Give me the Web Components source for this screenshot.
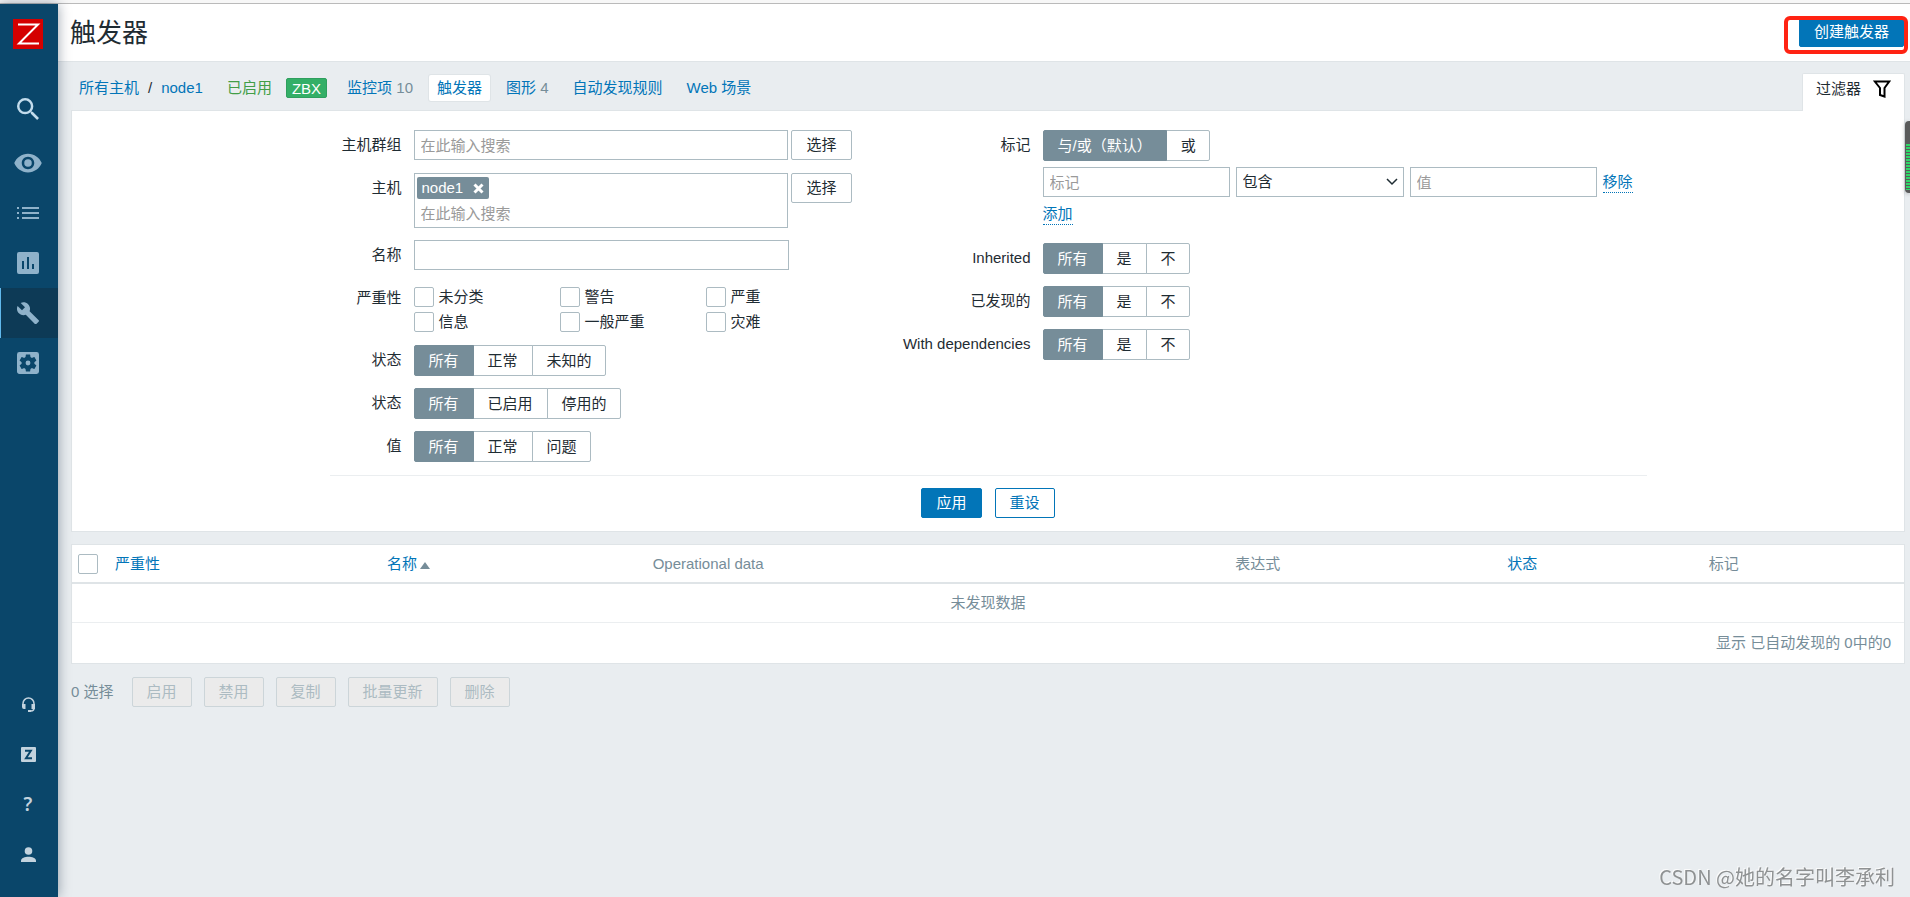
<!DOCTYPE html>
<html lang="zh-CN">
<head>
<meta charset="utf-8">
<meta name="viewport" content="width=device-width, initial-scale=1">
<title>触发器</title>
<style>
  :root {
    --blue: #0275b8;
    --ink: #1f2c33;
    --muted: #768d99;
    --field-border: #acbbc2;
    --line: #dfe4e7;
    --page: #e9edf0;
  }
  * { box-sizing: border-box; }
  body {
    margin: 0;
    background: var(--page);
    color: var(--ink);
    font: 15px/20px "Liberation Sans", "Noto Sans CJK SC", sans-serif;
  }
</style>
</head>
<body>
<app-shell>
  <side-bar slot="side"></side-bar>
  <page-header>触发器</page-header>
  <host-nav></host-nav>
  <trigger-filter></trigger-filter>
  <trigger-table></trigger-table>
  <bulk-actions></bulk-actions>
</app-shell>
<meter-widget></meter-widget>
<water-mark>CSDN @她的名字叫李承利</water-mark>

<script>
const define = (name, markup, setup) => customElements.define(name, class extends HTMLElement {
  constructor() {
    super();
    this.attachShadow({ mode: 'open' });
  }
  connectedCallback() {
    if (this.shadowRoot.firstChild) return;
    const t = document.createElement('template');
    t.innerHTML = '<style>*,:host{box-sizing:border-box}a{text-decoration:none;color:var(--blue)}</style>' +
      (typeof markup === 'function' ? markup(this) : markup);
    this.shadowRoot.append(t.content.cloneNode(true));
    if (setup) setup(this);
  }
});

/* ---------- icons ---------- */
const ICONS = {
  logo: ['0 0 30 30', '<path fill="#d40000" d="M0 0h30v30H0z"/><path fill="none" stroke="#fff" stroke-width="2" d="M5 5.500h20L6 24.500h20" stroke-linejoin="miter"/>'],
  search: ['3 3 17.500 17.500', '<path d="M15.500 14h-.79l-.28-.27A6.470 6.470 0 0 0 16 9.500 6.500 6.500 0 1 0 9.500 16c1.610 0 3.090-.59 4.230-1.570l.27.28v.79l5 4.990L20.490 19l-4.990-5zm-6 0C7.010 14 5 11.990 5 9.500S7.010 5 9.500 5 14 7.010 14 9.500 11.990 14 9.500 14z"/>'],
  eye: ['1 4 22 16', '<path d="M12 4.500C7 4.500 2.730 7.610 1 12c1.730 4.390 6 7.500 11 7.500s9.270-3.110 11-7.500c-1.730-4.390-6-7.500-11-7.500zM12 17c-2.760 0-5-2.240-5-5s2.240-5 5-5 5 2.240 5 5-2.240 5-5 5zm0-8a3 3 0 1 0 0 6 3 3 0 0 0 0-6z"/>'],
  list: ['0 0 22 22', '<path d="M0 5h2v2H0zM5 5h17v2H5zM0 10h2v2H0zM5 10h17v2H5zM0 15h2v2H0zM5 15h17v2H5z"/>'],
  chart: ['0 0 22 22', '<path fill-rule="evenodd" d="M2 0h18a2 2 0 0 1 2 2v18a2 2 0 0 1-2 2H2a2 2 0 0 1-2-2V2a2 2 0 0 1 2-2zM5 9v8h2V9zM10 5v12h2V5zM15 12v5h2v-5z"/>'],
  wrench: ['1 1 22 21.500', '<path d="M22.700 19l-9.100-9.100c.9-2.300.4-5-1.500-6.900-2-2-5-2.400-7.400-1.300L9 6 6 9 1.600 4.700C.4 7.100.9 10.100 2.900 12.100c1.900 1.900 4.600 2.400 6.900 1.500l9.100 9.100c.4.4 1 .4 1.400 0l2.300-2.300c.5-.4.5-1.100.1-1.400z"/>'],
  gear: ['3 3 18 18', '<path fill-rule="evenodd" d="M19 3H5a2 2 0 0 0-2 2v14c0 1.100.9 2 2 2h14a2 2 0 0 0 2-2V5a2 2 0 0 0-2-2zm-1.750 9c0 .23-.02.46-.05.68l1.480 1.160c.13.11.17.3.08.45l-1.400 2.420c-.09.15-.27.21-.43.15l-1.740-.7c-.36.28-.76.51-1.180.69l-.26 1.850c-.03.17-.18.3-.35.3h-2.800c-.17 0-.32-.13-.35-.29l-.26-1.850c-.43-.18-.82-.41-1.180-.69l-1.740.7c-.16.06-.34 0-.43-.15l-1.400-2.420a.36.36 0 0 1 .08-.45l1.480-1.160a5.200 5.200 0 0 1 0-1.370l-1.480-1.160a.36.36 0 0 1-.08-.45l1.400-2.420c.09-.15.27-.21.43-.15l1.740.7c.36-.28.76-.51 1.180-.69l.26-1.850c.03-.17.18-.3.35-.3h2.800c.17 0 .32.13.35.29l.26 1.850c.43.18.82.41 1.180.69l1.740-.7c.16-.06.34 0 .43.15l1.400 2.420c.09.15.05.34-.08.45l-1.480 1.160c.03.23.05.46.05.69zM12 10a2 2 0 1 0 0 4 2 2 0 0 0 0-4z"/>'],
  headset: ['0 0 15 15', '<path fill="none" stroke="currentColor" stroke-width="1.500" d="M2 8V6.500a5.500 5.500 0 0 1 11 0V11c0 2-1 3-3 3H8"/><path d="M1 7h3.500v5H3a2 2 0 0 1-2-2zM10.500 7H14v5h-3.500zM7 13h3v2H7z"/>'],
  zbox: ['0 0 15 15', '<path d="M1 0h13a1 1 0 0 1 1 1v13a1 1 0 0 1-1 1H1a1 1 0 0 1-1-1V1a1 1 0 0 1 1-1z"/><path fill="none" stroke="#0a466a" stroke-width="2" d="M4 3.800h5.800L5 11.200h6"/>'],
  user: ['0 0 15 15', '<circle cx="7.500" cy="4" r="3.800"/><path d="M0 15v-1.500C0 11 4 9.700 7.500 9.700S15 11 15 13.500V15z"/>'],
  funnel: ['0 0 18 18', '<path fill="none" stroke="#000" stroke-width="2" d="M1.800 1.500h14.400L11.500 8v8.500L7 15V8z"/>'],
  cross: ['0 0 11 11', '<path fill="none" stroke="#fff" stroke-width="3" d="M1.500 1.500l8 8M9.500 1.500l-8 8"/>'],
  chevron: ['0 0 12 8', '<path fill="none" stroke="#1f2c33" stroke-width="1.500" d="M1 1l5 5 5-5"/>'],
};
define('ui-icon', el => {
  const [box, body] = ICONS[el.getAttribute('name')];
  const w = el.getAttribute('w'), h = el.getAttribute('h') || w;
  return `<style>:host{display:block;line-height:0}svg{display:block;fill:currentColor}</style>
    <svg width="${w}" height="${h}" viewBox="${box}" aria-hidden="true">${body}</svg>`;
});

/* ---------- frame ---------- */
define('app-shell', `
  <style>
    :host { display: flex; flex-direction: column; min-height: 100vh; }
    .strip { height: 4px; background: #f7f7f7; border-bottom: 1px solid #bababa; }
    .row { flex: 1; display: flex; }
    main { flex: 1; min-width: 0; }
  </style>
  <div class="strip"></div>
  <div class="row"><slot name="side"></slot><main><slot></slot></main></div>`);

define('side-bar', `
  <style>
    :host { display: flex; width: 58px; flex: none; position: relative; z-index: 2;
      background: #0a466a; box-shadow: 0 0 12px rgba(0,26,51,.4); }
    nav { flex: 1; display: flex; flex-direction: column; padding: 15px 0 18px; }
    a { height: 50px; display: grid; place-items: center; color: #8fb2ca; padding-right: 2px; }
    .logo { height: 30px; padding-right: 2px; }
    .search { margin: 35px 0 4px; color: #c3dcec; }
    .on { background: #0d3a56; box-shadow: inset 1px 0 #60b8ec; }
    .low { color: #c3d3de; }
    .push { margin-top: auto; }
    .q { font: 600 19px/20px "Noto Sans", sans-serif; }
  </style>
  <nav aria-label="Main">
    <a class="logo" href="#" aria-label="Zabbix"><ui-icon name="logo" w="30"></ui-icon></a>
    <a class="search" href="#" aria-label="搜索"><ui-icon name="search" w="22"></ui-icon></a>
    <a href="#" aria-label="监测"><ui-icon name="eye" w="28" h="20"></ui-icon></a>
    <a href="#" aria-label="资产记录"><ui-icon name="list" w="22"></ui-icon></a>
    <a href="#" aria-label="报表"><ui-icon name="chart" w="22"></ui-icon></a>
    <a class="on" href="#" aria-label="配置"><ui-icon name="wrench" w="22"></ui-icon></a>
    <a href="#" aria-label="管理"><ui-icon name="gear" w="22"></ui-icon></a>
    <a class="low push" href="#" aria-label="支持"><ui-icon name="headset" w="15"></ui-icon></a>
    <a class="low" href="#" aria-label="Share"><ui-icon name="zbox" w="15"></ui-icon></a>
    <a class="low q" href="#">?</a>
    <a class="low" href="#" aria-label="用户"><ui-icon name="user" w="15"></ui-icon></a>
  </nav>`);

define('ui-button', el => `
  <style>
    :host { display: inline-block; flex: none; }
    button { display: block; height: 30px; padding: 0 14px; font: inherit; line-height: 28px;
      color: var(--ink); background: #fff; border: 1px solid var(--field-border); border-radius: 2px; }
    .primary { color: #fff; background: var(--blue); border-color: var(--blue); }
    .outline { color: var(--blue); border-color: var(--blue); }
    button:disabled { color: #acbbc2; background: #ebebeb; border-color: #ccd5d9; }
  </style>
  <button type="button" class="${el.getAttribute('kind') || ''}" ${el.hasAttribute('disabled') ? 'disabled' : ''}><slot></slot></button>`);

define('page-header', `
  <style>
    :host { display: flex; justify-content: space-between; align-items: flex-start; height: 58px; padding: 13px 6px 0 12px;
      background: #fff; border-bottom: 1px solid var(--line); }
    h1 { margin: 0; font-size: 26px; line-height: 32px; font-weight: 400; }
    .mark { position: relative; }
    .mark::after { content: ""; position: absolute; inset: -1px -4px -7px -15px;
      border: 4px solid #ff2313; border-radius: 6px; pointer-events: none; }
  </style>
  <h1><slot></slot></h1>
  <div class="mark"><ui-button kind="primary">创建触发器</ui-button></div>`);

define('host-nav', `
  <style>
    :host { display: flex; justify-content: space-between; align-items: flex-end; height: 48px; padding: 0 5px 0 13px; }
    nav { display: flex; align-items: center; height: 48px; gap: 8px; padding: 4px 0 0; }
    nav > * { padding: 3px 8px; line-height: 20px; }
    .crumb { display: flex; gap: 9px; }
    .ok { color: #429e47; }
    .count { color: var(--muted); }
    .zbx { padding: 0 5px; margin: 0 4px 0 -2px; height: 20px; color: #fff; background: #34af67;
      border: 1px solid #2f9f5e; border-radius: 2px; line-height: 19px; }
    .on { background: #fff; border-radius: 2px; box-shadow: 0 0 0 1px var(--line); }
    .tab { display: flex; align-items: center; gap: 12px; height: 38px; padding: 0 13px 8px; margin-bottom: -1px;
      position: relative; background: #fff; color: var(--ink);
      border: 1px solid var(--line); border-bottom: 0; border-radius: 2px 2px 0 0; }
  </style>
  <nav aria-label="Host">
    <span class="crumb"><a href="#">所有主机</a><span>/</span><a href="#">node1</a></span>
    <span class="ok">已启用</span>
    <span class="zbx">ZBX</span>
    <span><a href="#">监控项</a> <span class="count">10</span></span>
    <a class="on" href="#">触发器</a>
    <span><a href="#">图形</a> <span class="count">4</span></span>
    <a href="#">自动发现规则</a>
    <a href="#">Web 场景</a>
  </nav>
  <a class="tab" href="#">过滤器<ui-icon name="funnel" w="18"></ui-icon></a>`);

/* ---------- form fields ---------- */
const FIELD = `
  <style>
    :host { display: grid; grid-template-columns: var(--label-width) 1fr; column-gap: 12px; align-items: start; min-height: 31px; }
    .label { text-align: right; line-height: 20px; padding-top: 5px; }
    input.text { width: 375px; height: 30px; padding: 0 6px; font: inherit; color: var(--ink);
      background: #fff; border: 1px solid var(--field-border); border-radius: 0; outline: 0; }
    input::placeholder { color: #9a9a9a; opacity: 1; }
  </style>`;

define('text-field', el => FIELD + `
  <label class="label" for="f">${el.getAttribute('label')}</label>
  <input class="text" id="f" type="text">`);

define('pick-field', el => {
  const chip = el.getAttribute('chip');
  return FIELD + `
  <style>
    .row { display: flex; align-items: flex-start; gap: 3px; }
    .box { width: 375px; border: 1px solid var(--field-border); background: #fff; }
    .box input.text { display: block; width: 100%; height: 28px; border: 0; background: none; }
    .chip { display: flex; align-items: center; gap: 10px; width: max-content; height: 22px; margin: 3px 2px 0;
      padding: 0 5px; color: #fff; background: var(--muted); border-radius: 2px; }
    .chip button { padding: 0; border: 0; background: none; }
  </style>
  <label class="label" for="f">${el.getAttribute('label')}</label>
  <div class="row">
    <div class="box">${chip ? `<div class="chip">${chip}<button type="button" aria-label="移除 ${chip}"><ui-icon name="cross" w="11"></ui-icon></button></div>` : ''}
      <input class="text" id="f" type="text" placeholder="在此输入搜索"></div>
    <ui-button>选择</ui-button>
  </div>`;
});

const SEGMENTS = `
  <style>
    .seg { display: flex; width: max-content; }
    .seg label { position: relative; height: 31px; padding: 0 14px; line-height: 29px; background: #fff;
      border: 1px solid var(--field-border); }
    .seg label + label { margin-left: -1px; }
    .seg label:first-child { border-radius: 2px 0 0 2px; }
    .seg label:last-child { border-radius: 0 2px 2px 0; padding-right: 13px; }
    .seg label:has(:checked) { z-index: 1; color: #fff; background: var(--muted); border-color: var(--muted); }
    .seg input { position: absolute; inset: 0; margin: 0; appearance: none; }
  </style>`;
const segments = (name, options) => `<div class="seg" role="radiogroup" aria-labelledby="l">` +
  options.split(',').map((o, i) => `<label><input type="radio" name="${name}" ${i ? '' : 'checked'}>${o}</label>`).join('') + '</div>';

define('choice-field', el => FIELD + SEGMENTS + `
  <span class="label" id="l">${el.getAttribute('label')}</span>${segments('choice', el.getAttribute('options'))}`);

const CHECKBOX = `
  <style>
    input[type=checkbox] { appearance: none; flex: none; width: 20px; height: 20px; margin: 0; background: #fff;
      border: 1px solid var(--field-border); border-radius: 2px; }
    input[type=checkbox]:checked { background: var(--blue); }
  </style>`;

define('severity-field', el => FIELD + CHECKBOX + `
  <style>
    :host { min-height: 50px; }
    .grid { display: grid; grid-template-columns: repeat(3, 146px); gap: 5px 0; padding-top: 4px; }
    .grid label { display: flex; gap: 5px; height: 20px; }
  </style>
  <span class="label" id="l">${el.getAttribute('label')}</span>
  <div class="grid" role="group" aria-labelledby="l">` +
  ['未分类', '警告', '严重', '信息', '一般严重', '灾难'].map(t => `<label><input type="checkbox">${t}</label>`).join('') + '</div>');

define('tag-field', FIELD + SEGMENTS + `
  <style>
    .stack { display: grid; gap: 6px; padding-bottom: 6px; }
    .row { display: flex; gap: 6px; height: 30px; }
    .row input.text { width: 187px; }
    .select { display: grid; width: 168px; align-items: center; }
    .select > * { grid-area: 1 / 1; }
    select { appearance: none; height: 30px; padding: 0 6px; font: inherit; color: var(--ink);
      background: #fff; border: 1px solid var(--field-border); border-radius: 0; }
    .select ui-icon { justify-self: end; margin-right: 6px; pointer-events: none; }
    a.dot { justify-self: start; align-self: start; height: 22px; line-height: 22px; border-bottom: 1px dotted var(--blue); }
    .row a.dot { margin-top: 4px; }
  </style>
  <span class="label" id="l">标记</span>
  <div class="stack">
    ${segments('mode', '与/或（默认）,或')}
    <div class="row">
      <input class="text" type="text" placeholder="标记" aria-label="标记">
      <span class="select"><select aria-label="操作"><option>包含</option><option>等于</option></select><ui-icon name="chevron" w="12" h="8"></ui-icon></span>
      <input class="text" type="text" placeholder="值" aria-label="值">
      <a class="dot" href="#">移除</a>
    </div>
    <a class="dot" href="#">添加</a>
  </div>`);

define('trigger-filter', `
  <style>
    :host { display: block; margin: 0 5px 12px 13px; padding: 19px 0 13px; background: #fff; border: 1px solid var(--line); }
    form { max-width: 1317px; margin: 0 auto; }
    .cols { display: flex; padding-bottom: 13px; border-bottom: 1px solid #ebeef0; }
    .cols > div { display: flex; flex-direction: column; gap: 12px; }
    .left { --label-width: 72px; width: 522px; }
    .right { --label-width: 179px; flex: 1; }
    .foot { display: flex; justify-content: center; gap: 13px; padding-top: 12px; }
  </style>
  <form>
    <div class="cols">
      <div class="left">
        <pick-field label="主机群组"></pick-field>
        <pick-field label="主机" chip="node1"></pick-field>
        <text-field label="名称"></text-field>
        <severity-field label="严重性"></severity-field>
        <choice-field label="状态" options="所有,正常,未知的"></choice-field>
        <choice-field label="状态" options="所有,已启用,停用的"></choice-field>
        <choice-field label="值" options="所有,正常,问题"></choice-field>
      </div>
      <div class="right">
        <tag-field></tag-field>
        <choice-field label="Inherited" options="所有,是,不"></choice-field>
        <choice-field label="已发现的" options="所有,是,不"></choice-field>
        <choice-field label="With dependencies" options="所有,是,不"></choice-field>
      </div>
    </div>
    <div class="foot"><ui-button kind="primary">应用</ui-button><ui-button kind="outline">重设</ui-button></div>
  </form>`);

/* ---------- results ---------- */
define('trigger-table', CHECKBOX + `
  <style>
    :host { display: block; margin: 0 5px 13px 13px; background: #fff; border: 1px solid var(--line); }
    table { width: 100%; table-layout: fixed; border-collapse: separate; border-spacing: 0; color: var(--muted); }
    th, td { padding: 0 6px; font-weight: 400; text-align: left; line-height: 20px; }
    th { height: 39px; border-bottom: 2px solid var(--line); }
    th input { display: block; }
    .none td { height: 39px; text-align: center; border-bottom: 1px solid #ebeef0; }
    .sum td { height: 40px; text-align: right; padding-right: 13px; }
    .up { display: inline-block; margin-left: 3px; border: 5px solid transparent; border-top: 0; border-bottom: 7px solid var(--muted); }
  </style>
  <table>
    <colgroup><col style="width:37px"><col style="width:14.85%"><col style="width:14.5%"><col style="width:31.8%"><col style="width:14.85%"><col style="width:11%"><col></colgroup>
    <thead><tr>
      <th><input type="checkbox" aria-label="全选"></th>
      <th><a href="#">严重性</a></th>
      <th><a href="#">名称<span class="up"></span></a></th>
      <th>Operational data</th><th>表达式</th>
      <th><a href="#">状态</a></th><th>标记</th>
    </tr></thead>
    <tbody>
      <tr class="none"><td colspan="7">未发现数据</td></tr>
      <tr class="sum"><td colspan="7">显示 已自动发现的 0中的0</td></tr>
    </tbody>
  </table>`);

define('bulk-actions', `
  <style>
    :host { display: flex; align-items: center; gap: 12px; padding: 0 13px; color: var(--muted); }
    span { margin-right: 6px; }
  </style>
  <span>0 选择</span>
  <ui-button disabled>启用</ui-button><ui-button disabled>禁用</ui-button><ui-button disabled>复制</ui-button>
  <ui-button disabled>批量更新</ui-button><ui-button disabled>删除</ui-button>`);

/* ---------- overlays ---------- */
define('meter-widget', `
  <style>
    :host { display: block; position: fixed; z-index: 3; right: 0; top: 121px; width: 5px; height: 72px; padding-top: 23px;
      background: #5a5a5a; border-radius: 4px 0 0 4px; box-shadow: 0 1px 4px rgba(0,0,0,.25); }
    div { height: 46px; margin-left: 1px; background: repeating-linear-gradient(#2fd668 0 2px, #5a5a5a 2px 3px); }
  </style><div></div>`);

define('water-mark', `
  <style>
    :host { display: block; position: fixed; right: 15px; bottom: 6px; font: 20px/28px "Noto Sans CJK SC", sans-serif;
      color: #8f9293; text-shadow: -1px -1px #fbfbfb; }
  </style><slot></slot>`);
</script>
</body>
</html>
